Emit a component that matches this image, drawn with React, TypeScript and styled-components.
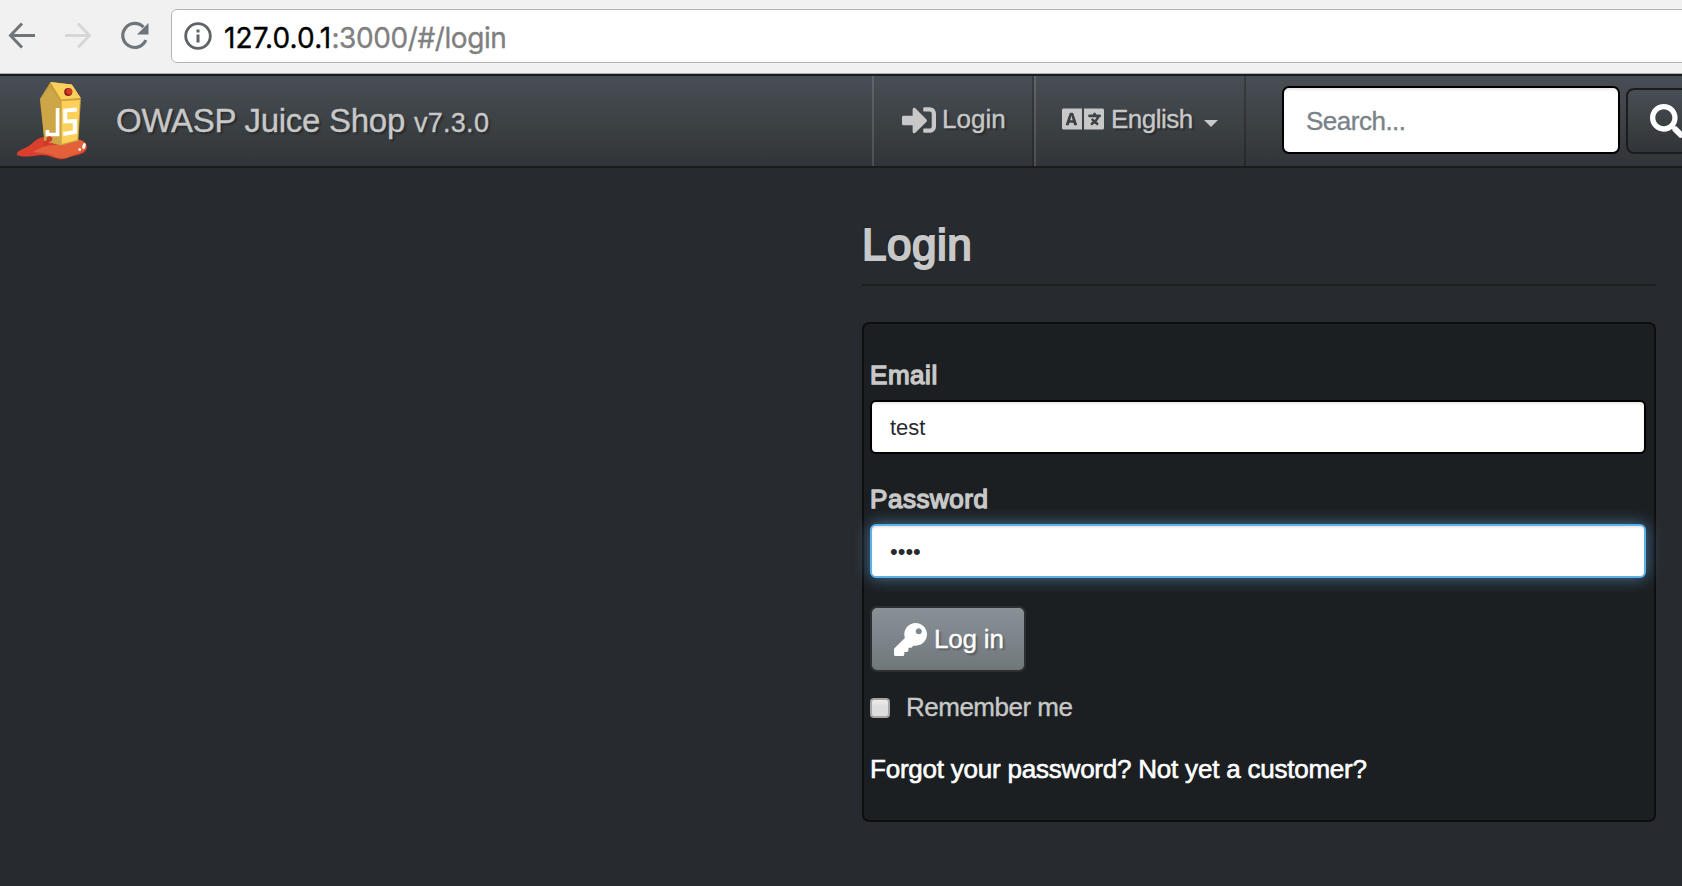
import React from 'react';
import styled, { createGlobalStyle, css } from 'styled-components';
import { FaKey, FaLanguage, FaSearch, FaSignInAlt } from 'react-icons/fa';

const GlobalStyle = createGlobalStyle`
  *, *::before, *::after { box-sizing: border-box; }
  html, body { margin: 0; padding: 0; }
  body {
    height: 886px;
    overflow: hidden;
    background: #272b2f;
    color: #c8c8c8;
    font-family: "Liberation Sans", Arial, sans-serif;
    font-size: 26px;
  }
`;

const lightStroke = css`
  -webkit-text-stroke: 0.35px currentColor;
`;

const fauxBold = css`
  -webkit-text-stroke: 1.4px currentColor;
`;

const Page = styled.div`
  width: 1682px;
  height: 886px;
  overflow: hidden;
`;

const BrowserBar = styled.div`
  height: 74px;
  display: flex;
  align-items: flex-start;
  background: #f1f1f1;
  border-bottom: 1px solid #b2b2b2;
  padding: 9px 0 0 8px;
`;

const BrowserIcons = styled.div`
  width: 163px;
  display: flex;
  gap: 28px;
  padding-top: 12px;
`;

const AddressField = styled.div`
  flex: 1;
  height: 54px;
  margin-right: -10px;
  display: flex;
  align-items: center;
  gap: 12px;
  padding-left: 12px;
  background: #fff;
  border: 1px solid #b4b4b4;
  border-radius: 6px;
`;

const Url = styled.span`
  padding-top: 3px;
  font-family: Inter, Roboto, sans-serif;
  font-size: 28px;
  letter-spacing: -0.4px;
  line-height: 34px;
  color: #808080;
  white-space: nowrap;
  ${lightStroke}
`;

const Host = styled.span`
  color: #000;
  letter-spacing: 0.1px;
`;

const Navbar = styled.nav`
  height: 94px;
  display: flex;
  background: linear-gradient(#484e55, #3a3f42 60%, #313438);
  border-top: 2px solid #1a1b1d;
  border-bottom: 2px solid #1a1b1d;
  text-shadow: 2px 2px 2px rgba(0, 0, 0, 0.35);
`;

const Brand = styled.div`
  width: 872px;
  flex: none;
  display: flex;
  align-items: flex-start;
  padding: 5px 0 0 16px;
`;

const BrandName = styled.span`
  margin-left: 29px;
  padding-top: 21px;
  font-size: 33px;
  line-height: 38px;
  letter-spacing: -0.28px;
  white-space: nowrap;
  ${lightStroke}

  small {
    font-size: 27px;
    letter-spacing: 0.3px;
  }
`;

const NavItem = styled.div<{ $width: number; $padding: number }>`
  width: ${({ $width }) => $width}px;
  flex: none;
  display: flex;
  align-items: flex-start;
  padding: 27px 0 0 ${({ $padding }) => $padding}px;
  line-height: 32px;
  white-space: nowrap;
  border-left: 2px solid rgba(255, 255, 255, 0.13);
  border-right: 2px solid rgba(0, 0, 0, 0.22);

  svg {
    display: block;
    flex: none;
  }
`;

const NavIcon = styled.span<{ $top: number }>`
  display: block;
  flex: none;
  margin-top: ${({ $top }) => $top}px;
`;

const NavText = styled.span<{ $gap: number; $spacing?: number }>`
  margin-left: ${({ $gap }) => $gap}px;
  letter-spacing: ${({ $spacing = 0 }) => $spacing}px;
  ${lightStroke}
`;

const Caret = styled.i`
  margin: 17px 0 0 11px;
  border: 7px solid transparent;
  border-top: 7px solid #c8c8c8;
  border-bottom: 0;
`;

const SearchForm = styled.form`
  flex: none;
  display: flex;
  align-items: flex-start;
  margin: 10px 0 0 36px;
  gap: 6px;
`;

const SearchInput = styled.input`
  width: 338px;
  height: 68px;
  padding: 2px 22px 0;
  border: 2px solid #000;
  border-radius: 7px;
  background: #fff;
  box-shadow: inset 0 2px 2px rgba(0, 0, 0, 0.075);
  font: 26px "Liberation Sans", Arial, sans-serif;
  letter-spacing: -0.5px;
  color: #272b30;
  outline: none;

  &::placeholder {
    color: #7a8288;
    opacity: 1;
    ${lightStroke}
  }
`;

const SearchButton = styled.button`
  width: 86px;
  height: 66px;
  margin-top: 2px;
  flex: none;
  padding: 0 0 0 22px;
  display: flex;
  align-items: flex-start;
  border: 2px solid #1b1c1e;
  border-radius: 8px;
  background: linear-gradient(#484e55, #3a3f42 60%, #313438);
  color: #fff;

  svg {
    margin-top: 14px;
    flex: none;
  }
`;

const Content = styled.main`
  width: 794px;
  margin-left: 862px;
  padding-top: 52px;
`;

const Title = styled.h1`
  margin: 0;
  height: 66px;
  border-bottom: 2px solid #1c1e22;
  font-size: 44px;
  font-weight: 400;
  line-height: 50px;
  letter-spacing: 0.5px;
  -webkit-text-stroke: 2px currentColor;
  text-shadow: -2px -2px 0 rgba(0, 0, 0, 0.25);
`;

const Well = styled.section`
  height: 500px;
  margin-top: 36px;
  padding: 35px 8px 0 6px;
  border: 2px solid #0d0e10;
  border-radius: 7px;
  background: #1c1f22;
`;

const Label = styled.label`
  display: block;
  height: 41px;
  line-height: 32px;
  letter-spacing: 0.55px;
  ${fauxBold}
`;

const TextInput = styled.input<{ $focused?: boolean }>`
  display: block;
  width: 776px;
  height: 54px;
  padding: 2px 18px 0;
  border: 2px solid ${({ $focused }) => ($focused ? '#5bb0e8' : '#000')};
  border-radius: 6px;
  background: #fff;
  box-shadow: inset 0 2px 2px rgba(0, 0, 0, 0.075)
    ${({ $focused }) => $focused && ', 0 0 16px rgba(102, 175, 233, 0.6)'};
  font: 22px "Liberation Sans", Arial, sans-serif;
  color: #272b30;
  outline: none;
`;

const Field = styled.div`
  height: 124px;

  & + & {
    height: 123px;
  }
`;

const LoginButton = styled.button`
  width: 156px;
  height: 66px;
  display: flex;
  align-items: center;
  padding: 0 0 0 22px;
  border: 2px solid #2d3033;
  border-radius: 7px;
  background: linear-gradient(#8a9196, #7a8287 60%, #70777b);
  color: #fff;
  font: 26px "Liberation Sans", Arial, sans-serif;
  text-shadow: 2px 2px 2px rgba(0, 0, 0, 0.3);
  white-space: nowrap;

  span {
    margin-left: 7px;
    letter-spacing: -0.2px;
    ${lightStroke}
  }
`;

const RememberRow = styled.label`
  display: flex;
  align-items: center;
  height: 32px;
  margin-top: 19px;
  letter-spacing: -0.5px;
  ${lightStroke}
`;

const Checkbox = styled.input`
  appearance: none;
  width: 20px;
  height: 20px;
  margin: 1px 16px 0 0;
  border: 2px solid #a5a5a5;
  border-radius: 4px;
  background: linear-gradient(#ededed, #dcdcdc 45%, #dedede);
`;

const Links = styled.p`
  margin: 30px 0 0;
  line-height: 32px;
  color: #fff;
  letter-spacing: -0.22px;
  white-space: nowrap;
  -webkit-text-stroke: 0.6px currentColor;
`;

const Link = styled.a`
  color: #fff;
`;

const BackIcon = () => (
  <svg width="28" height="28" viewBox="0 0 28 28" fill="none" stroke="#6e757a" strokeWidth="3">
    <path d="M27 14.500H3M14 2.500L2.500 14.500L14 26.500" />
  </svg>
);

const ForwardIcon = () => (
  <svg width="28" height="28" viewBox="0 0 28 28" fill="none" stroke="#d6d8d8" strokeWidth="3">
    <path d="M1 14.500H25M14 2.500L25.500 14.500L14 26.500" />
  </svg>
);

const ReloadIcon = () => (
  <svg width="30" height="30" viewBox="0 0 30 30">
    <path
      d="M23.500 6.200A12 12 0 1 0 25.800 19.200"
      fill="none"
      stroke="#6e757a"
      strokeWidth="3.200"
    />
    <path d="M28.500 2V13.500H17Z" fill="#6e757a" />
  </svg>
);

const InfoIcon = () => (
  <svg width="28" height="28" viewBox="0 0 28 28">
    <circle cx="14" cy="14" r="12.300" fill="none" stroke="#5f6368" strokeWidth="2.800" />
    <path d="M12.500 7.500H15.500V10.500H12.500ZM12.500 12.500H15.500V20.500H12.500Z" fill="#5f6368" />
  </svg>
);

const JuiceLogo = () => (
  <svg width="71" height="80" viewBox="0 0 70 80" preserveAspectRatio="none">
    <path
      d="M1 74C0 71 4 69 9 67C16 64 19 57 27 56C34 54 48 57 57 58C66 58 70 62 70 66C70 72 62 74 57 75C51 76 48 79 43 78C36 77 33 74 25 74C17 75 6 77 1 74Z"
      fill="#d93f2c"
    />
    <path
      d="M17 71C23 67 30 64 39 64L54 59C65 57 70 62 69 67C67 72 58 73 54 75C49 78 42 78 37 75C31 72 24 72 17 71Z"
      fill="#e4603a"
    />
    <ellipse cx="67" cy="65" rx="1.600" ry="3" fill="#fff" transform="rotate(15 67 65)" />
    <circle cx="62.800" cy="68.500" r="1.300" fill="#fff" />
    <path d="M34 1L55 3.500L64 18L61.500 60L44.500 64.500L28 60L23.500 18Z" fill="#c99e3d" />
    <path d="M34 1L55 3.500L64 17L44.500 18.500Z" fill="#fcd15b" />
    <path d="M33 6L44 20L44.500 64L28 60L24.500 19Z" fill="#cda747" />
    <path d="M45 20L63 19L60.500 59L45 63Z" fill="#fdd05a" />
    <circle cx="51.500" cy="11" r="4" fill="#8e2219" />
    <circle cx="52.600" cy="10.400" r="3" fill="#d23c29" />
    <path d="M41 27V53.500H31V49" fill="none" stroke="#fff" strokeWidth="3.600" />
    <path d="M60 28.500L48.500 29.500V40.500L58 40V51L46.500 53" fill="none" stroke="#fff" strokeWidth="4" />
    <path d="M29 64C29 60 31 62 33 58" fill="none" stroke="#c73a27" strokeWidth="3" />
    <circle cx="33" cy="58" r="2.800" fill="#cf3d29" />
  </svg>
);

export default function App() {
  return (
    <Page>
      <GlobalStyle />
      <BrowserBar>
        <BrowserIcons>
          <BackIcon />
          <ForwardIcon />
          <ReloadIcon />
        </BrowserIcons>
        <AddressField>
          <InfoIcon />
          <Url>
            <Host>127.0.0.1</Host>:3000/#/login
          </Url>
        </AddressField>
      </BrowserBar>
      <Navbar>
        <Brand>
          <JuiceLogo />
          <BrandName>
            OWASP Juice Shop <small>v7.3.0</small>
          </BrandName>
        </Brand>
        <NavItem $width={162} $padding={28}>
          <NavIcon $top={0}>
            <FaSignInAlt size={34} />
          </NavIcon>
          <NavText $gap={6}>Login</NavText>
        </NavItem>
        <NavItem $width={212} $padding={26}>
          <NavIcon $top={-5}>
            <FaLanguage size={42} />
          </NavIcon>
          <NavText $gap={7} $spacing={-0.5}>English</NavText>
          <Caret />
        </NavItem>
        <SearchForm>
          <SearchInput placeholder="Search..." />
          <SearchButton type="button" aria-label="Search">
            <FaSearch size={34} />
          </SearchButton>
        </SearchForm>
      </Navbar>
      <Content>
        <Title>Login</Title>
        <Well>
          <Field>
            <Label htmlFor="email">Email</Label>
            <TextInput id="email" type="text" defaultValue="test" />
          </Field>
          <Field>
            <Label htmlFor="password">Password</Label>
            <TextInput id="password" type="password" defaultValue="test" $focused />
          </Field>
          <LoginButton type="button">
            <FaKey size={33} />
            <span>Log in</span>
          </LoginButton>
          <RememberRow>
            <Checkbox type="checkbox" />
            Remember me
          </RememberRow>
          <Links>
            <Link>Forgot your password?</Link> <Link>Not yet a customer?</Link>
          </Links>
        </Well>
      </Content>
    </Page>
  );
}
